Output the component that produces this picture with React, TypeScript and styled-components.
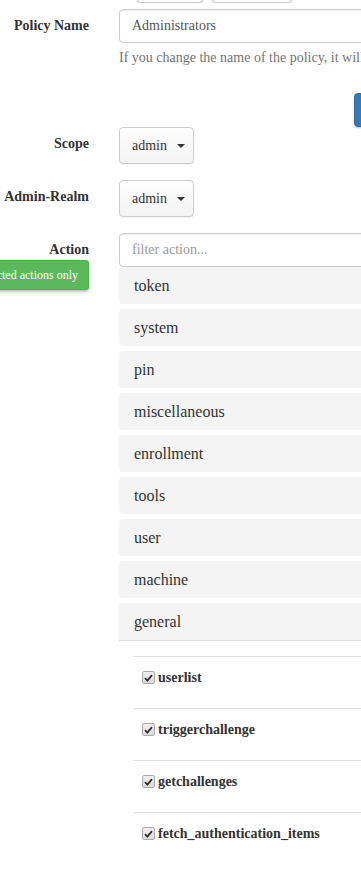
import React from 'react'
import styled, { createGlobalStyle } from 'styled-components'

const GlobalStyle = createGlobalStyle`
  html, body {
    margin: 0;
    padding: 0;
    background: #fff;
    overflow-x: hidden;
  }
  body {
    font-family: "Liberation Serif", "Times New Roman", serif;
    font-size: 14px;
    line-height: 1.42857;
    color: #333;
  }
  input, button, label {
    font-family: "Liberation Serif", "Times New Roman", serif;
  }
`

const Page = styled.div`
  width: 700px;
`

const TopBar = styled.div`
  height: 3px;
  overflow: hidden;
  display: flex;
  align-items: flex-end;
  gap: 9px;
  padding-left: 137px;
`

const GhostButton = styled.div<{ w: number }>`
  width: ${p => p.w}px;
  height: 30px;
  flex: none;
  border: 1px solid #ccc;
  border-radius: 4px;
  background: #fff;
  box-shadow: 0 1px 2px rgba(0, 0, 0, 0.2);
  box-sizing: border-box;
`

const FormRow = styled.div<{ top: number }>`
  display: grid;
  grid-template-columns: 104px 1fr;
  margin-top: ${p => p.top}px;
`

const LabelCol = styled.div`
  display: flex;
  flex-direction: column;
  align-items: flex-end;
  padding-right: 15px;
`

const Label = styled.label`
  font-family: "Liberation Serif", "Times New Roman", serif;
  font-weight: bold;
  font-size: 14px;
  padding-top: 7px;
  line-height: 20px;
  white-space: nowrap;
  text-align: right;
`

const Control = styled.div`
  padding-left: 15px;
  min-width: 0;
`

const TextInput = styled.input`
  display: block;
  box-sizing: border-box;
  width: 100%;
  height: 34px;
  padding: 6px 12px;
  font-family: "Liberation Serif", "Times New Roman", serif;
  font-size: 14px;
  color: #555;
  border: 1px solid #ccc;
  border-radius: 4px;
  box-shadow: inset 0 1px 1px rgba(0, 0, 0, 0.075);
  outline: none;
  &::placeholder {
    color: #999;
  }
`

const HelpText = styled.p`
  margin: 5px 0 0;
  line-height: 20px;
  color: #737373;
  white-space: nowrap;
`

const SaveRow = styled.div`
  margin-top: 25px;
  padding-left: 354px;
  height: 34px;
`

const PrimaryButton = styled.button`
  height: 34px;
  padding: 6px 12px;
  font-family: "Liberation Serif", "Times New Roman", serif;
  font-size: 14px;
  color: #fff;
  background: #337ab7;
  border: 1px solid #2e6da4;
  border-radius: 4px;
  box-shadow: 0 1px 2px rgba(0, 0, 0, 0.25);
`

const SelectButton = styled.button`
  display: flex;
  align-items: center;
  box-sizing: border-box;
  width: 75px;
  height: 37px;
  padding: 0 8px 0 12px;
  font-family: "Liberation Serif", "Times New Roman", serif;
  font-size: 14px;
  color: #333;
  background: linear-gradient(#fdfdfd, #f4f4f4);
  border: 1px solid #ccc;
  border-radius: 4px;
  box-shadow: 0 1px 1px rgba(0, 0, 0, 0.05);
`

const Caret = styled.span`
  margin-left: auto;
  width: 0;
  height: 0;
  border-top: 4px solid #333;
  border-left: 4px solid transparent;
  border-right: 4px solid transparent;
`

const ToggleButton = styled.button`
  height: 30px;
  padding: 5px 10px;
  font-family: "Liberation Serif", "Times New Roman", serif;
  font-size: 12px;
  line-height: 18px;
  white-space: nowrap;
  color: #fff;
  background: #5cb85c;
  border: 1px solid #4cae4c;
  border-radius: 3px;
  box-shadow: 0 2px 3px rgba(0, 0, 0, 0.25);
`

const PanelGroup = styled.div`
  display: flex;
  flex-direction: column;
  gap: 5px;
`

const PanelHeading = styled.div<{ open?: boolean }>`
  box-sizing: content-box;
  height: 19px;
  padding: 9px 15px;
  font-size: 16px;
  line-height: 19px;
  color: #333;
  background: #f4f4f4;
  border-radius: ${p => (p.open ? '4px 4px 0 0' : '4px')};
  border-bottom: ${p => (p.open ? '1px solid #ddd' : 'none')};
`

const PanelBody = styled.div`
  padding: 15px 0 0 15px;
`

const ActionRow = styled.div`
  display: flex;
  align-items: flex-start;
  gap: 3px;
  box-sizing: border-box;
  height: 52px;
  border-top: 1px solid #ddd;
  padding-left: 8px;
  padding-top: 11px;
`

const CheckBox = styled.span`
  display: flex;
  align-items: center;
  justify-content: center;
  box-sizing: border-box;
  width: 13px;
  height: 13px;
  margin-top: 3px;
  border: 1px solid #a9a9a9;
  border-radius: 2px;
  background: linear-gradient(#f0f0f0, #dcdcdc);
`

const ActionName = styled.span`
  font-weight: bold;
  line-height: 20px;
`

const groups = ['token', 'system', 'pin', 'miscellaneous', 'enrollment', 'tools', 'user', 'machine']
const actions = ['userlist', 'triggerchallenge', 'getchallenges', 'fetch_authentication_items']

function Tick() {
  return (
    <svg width="9" height="8" viewBox="0 0 9 8">
      <path d="M1 4.2 L3.4 6.6 L8 1.2" fill="none" stroke="#333" strokeWidth="1.9" />
    </svg>
  )
}

export default function App() {
  return (
    <Page>
      <GlobalStyle />
      <TopBar>
        <GhostButton w={66} />
        <GhostButton w={80} />
      </TopBar>

      <FormRow top={6}>
        <LabelCol>
          <Label>Policy Name</Label>
        </LabelCol>
        <Control>
          <TextInput defaultValue="Administrators" />
          <HelpText>If you change the name of the policy, it will be created as a new policy.</HelpText>
        </Control>
      </FormRow>

      <SaveRow>
        <PrimaryButton>Save</PrimaryButton>
      </SaveRow>

      <FormRow top={0}>
        <LabelCol>
          <Label>Scope</Label>
        </LabelCol>
        <Control>
          <SelectButton>admin<Caret /></SelectButton>
        </Control>
      </FormRow>

      <FormRow top={16}>
        <LabelCol>
          <Label>Admin-Realm</Label>
        </LabelCol>
        <Control>
          <SelectButton>admin<Caret /></SelectButton>
        </Control>
      </FormRow>

      <FormRow top={16}>
        <LabelCol>
          <Label>Action</Label>
          <ToggleButton>Show selected actions only</ToggleButton>
        </LabelCol>
        <Control>
          <TextInput placeholder="filter action..." />
          <PanelGroup>
            {groups.map(g => (
              <PanelHeading key={g}>{g}</PanelHeading>
            ))}
            <div>
              <PanelHeading open>general</PanelHeading>
              <PanelBody>
                {actions.map(a => (
                  <ActionRow key={a}>
                    <CheckBox><Tick /></CheckBox>
                    <ActionName>{a}</ActionName>
                  </ActionRow>
                ))}
              </PanelBody>
            </div>
          </PanelGroup>
        </Control>
      </FormRow>
    </Page>
  )
}
